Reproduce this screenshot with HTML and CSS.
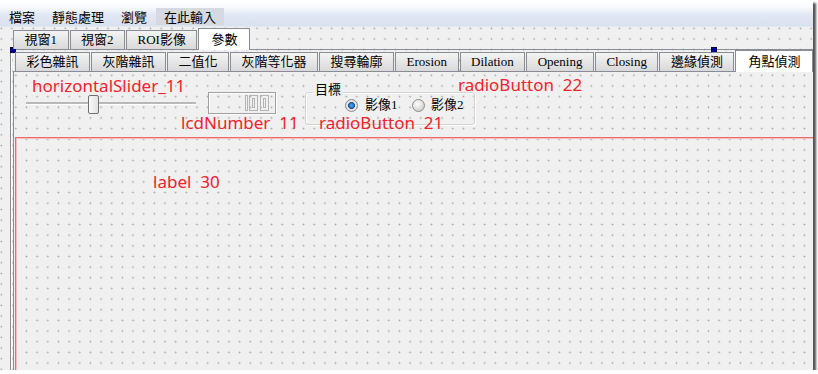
FILE: index.html
```html
<!DOCTYPE html>
<html>
<head>
<meta charset="utf-8">
<link rel="stylesheet" href="styles.css">
</head>
<body>

<div class="shot">

  <div class="menubar">
    <span class="menu">檔案</span>
    <span class="menu">靜態處理</span>
    <span class="menu">瀏覽</span>
    <span class="menu menu-new">在此輸入</span>
  </div>

  <div class="form">
    <div class="tabbar outer-bar">
      <div class="tab">視窗1</div>
      <div class="tab">視窗2</div>
      <div class="tab">ROI影像</div>
      <div class="tab active">參數</div>
    </div>

    <div class="pane outer-pane">
      <div class="tabbar inner-bar">
        <div class="tab">彩色雜訊</div>
        <div class="tab">灰階雜訊</div>
        <div class="tab">二值化</div>
        <div class="tab">灰階等化器</div>
        <div class="tab">搜尋輪廓</div>
        <div class="tab">Erosion</div>
        <div class="tab">Dilation</div>
        <div class="tab">Opening</div>
        <div class="tab">Closing</div>
        <div class="tab">邊緣偵測</div>
        <div class="tab active">角點偵測</div>
      </div>

      <!-- designer canvas: widgets sit where they were dropped -->
      <div class="pane canvas">
        <div class="slider">
          <div class="groove"></div>
          <div class="knob"></div>
        </div>

        <div class="lcd">
          <svg width="68" height="22" viewBox="0 0 68 22">
            <g fill="none" stroke="#b4b4b4" stroke-width="1">
              <rect x="37.5" y="3.5" width="2" height="15"/>
              <rect x="41.5" y="3.5" width="8" height="15"/>
              <rect x="44.5" y="6.5" width="2" height="9"/>
              <rect x="52.5" y="3.5" width="8" height="15"/>
              <rect x="55.5" y="6.5" width="2" height="9"/>
            </g>
          </svg>
        </div>

        <div class="groupbox">
          <span class="gb-title">目標</span>
        </div>
        <label class="radio r1"><span class="dot checked"></span>影像1</label>
        <label class="radio r2"><span class="dot"></span>影像2</label>

        <div class="frame">
          <span class="name n-label">label  30</span>
        </div>

        <span class="name n-slider">horizontalSlider_11</span>
        <span class="name n-lcd">lcdNumber  11</span>
        <span class="name n-r21">radioButton  21</span>
        <span class="name n-r22">radioButton  22</span>
      </div>
    </div>
  </div>

  <span class="handle h-left"></span>
  <span class="handle h-right"></span>
</div>

</body>
</html>
```

FILE: styles.css
```css
body {
  margin: 0;
  background: #fff;
  font-family: "Liberation Serif", "Noto Sans CJK TC", serif;
}

.shot {
  position: relative;
  width: 813px;
  height: 370px;
  background: #f0f0f0;
  box-shadow: 3px 3px 2px #555;
  display: flex;
  flex-direction: column;
  overflow: hidden;
}

/* menu bar */
.menubar {
  flex: none;
  height: 26px;
  padding-left: 1px;
  display: flex;
  align-items: flex-end;
  border-bottom: 1px solid #e4e8ee;
  background: linear-gradient(#ffffff 0%, #f8fafc 28%, #e2e9f4 55%, #d9e1ef 100%);
  font: 13px "Noto Sans CJK TC", sans-serif;
  color: #000;
}

.menu {
  height: 17px;
  line-height: 17px;
  padding: 0 8px;
  margin: 0 1px 1px 0;
}

.menu-new {
  background: #d5d9e1;
}

/* form with the designer grid */
.form {
  flex: 1;
  display: flex;
  flex-direction: column;
  padding: 1px 0 0 10px;
  background-color: #f0f0f0;
  background-image: radial-gradient(circle, #a4a4a4 0.6px, transparent 1.2px);
  background-size: 10.67px 10.67px;
  background-position: -4px -4px;
}

.tabbar {
  flex: none;
  height: 21px;
  display: flex;
  align-items: flex-end;
  position: relative;
  z-index: 1;
  white-space: nowrap;
}

.outer-bar {
  margin-left: 3px;
}

.inner-bar {
  margin-left: 2px;
}

.tab {
  height: 18px;
  line-height: 18px;
  padding: 0 10.5px;
  margin-right: 1px;
  border: 1px solid #898c95;
  border-bottom: none;
  background: linear-gradient(#f4f4f4, #e6e6e6 50%, #d9d9d9);
  font-size: 13px;
  color: #000;
}

.tab.active {
  height: 21px;
  line-height: 21px;
  padding: 0 12px;
  margin-bottom: -1px;
  background: #fff;
}

.pane {
  border-top: 1px solid #898c95;
  border-left: 1px solid #898c95;
}

.outer-pane {
  flex: 1;
  display: flex;
  flex-direction: column;
  padding-left: 2px;
  box-shadow: inset 1px 0 #fff;
}

.canvas {
  flex: 1;
  position: relative;
  background-color: #f0f0f0;
  background-image: radial-gradient(circle, #a4a4a4 0.6px, transparent 1.2px);
  background-size: 10.67px 10.67px;
  background-position: -3.5px -2px;
  font-size: 13px;
}

/* widgets */
.slider {
  position: absolute;
  left: 12px;
  top: 23px;
  width: 170px;
  height: 18px;
}

.groove {
  position: absolute;
  left: 0;
  right: 0;
  top: 7px;
  height: 2px;
  background: #b9b9b9;
  border-bottom: 1px solid #fff;
}

.knob {
  position: absolute;
  left: 62px;
  top: 0;
  width: 9px;
  height: 17px;
  border: 1px solid #707070;
  border-radius: 2px;
  background: linear-gradient(90deg, #fafafa, #e2e2e2);
}

.lcd {
  position: absolute;
  left: 194px;
  top: 20px;
  width: 66px;
  height: 20px;
  border: 1px solid #a0a0a0;
  box-shadow: inset 1px 1px #fff, 1px 1px #fff;
}

.lcd svg {
  display: block;
  margin: -1px;
}

.groupbox {
  position: absolute;
  left: 291px;
  top: 20px;
  width: 168px;
  height: 31px;
  border: 1px solid #d3d3d3;
  border-radius: 3px;
  box-shadow: inset 1px 1px #fff, 1px 1px #fff;
}

.gb-title {
  position: absolute;
  left: 7px;
  top: -11px;
  padding: 0 2px;
  line-height: 16px;
  background: #f0f0f0;
}

.radio {
  position: absolute;
  top: 25px;
  display: flex;
  align-items: center;
  gap: 7px;
  line-height: 16px;
}

.r1 {
  left: 331px;
}

.r2 {
  left: 398px;
  gap: 6px;
}

.dot {
  width: 11px;
  height: 11px;
  border: 1px solid #8c8c8c;
  border-radius: 50%;
  background: radial-gradient(circle at 40% 35%, #fdfdfd, #d4d4d4 70%, #c4c4c4);
}

.dot.checked {
  background: radial-gradient(circle, #4fb0f0 0, #1c6fc0 2.5px, #2a4f80 3.2px, #e8e8e8 3.8px, #d4d4d4 100%);
}

.frame {
  position: absolute;
  left: 1px;
  top: 65px;
  right: -20px;
  bottom: -20px;
  border-top: 1px solid #ef6a6a;
  border-left: 1px solid #ef6a6a;
  box-shadow: inset 1px 1px #f7bcbc;
}

.name {
  position: absolute;
  font: 17px/20px "Noto Sans", sans-serif;
  color: #f0222c;
  white-space: pre;
}

.n-label {
  left: 137px;
  top: 34px;
}

.n-slider {
  left: 18px;
  top: 4px;
}

.n-lcd {
  left: 167px;
  top: 41px;
}

.n-r21 {
  left: 305px;
  top: 41px;
}

.n-r22 {
  left: 444px;
  top: 3px;
}

/* designer selection handles */
.handle {
  position: absolute;
  width: 4px;
  height: 4px;
  background: #0000a8;
  border: 1px solid #000040;
}

.h-left {
  left: 10px;
  top: 47px;
}

.h-right {
  left: 711px;
  top: 47px;
}
```
